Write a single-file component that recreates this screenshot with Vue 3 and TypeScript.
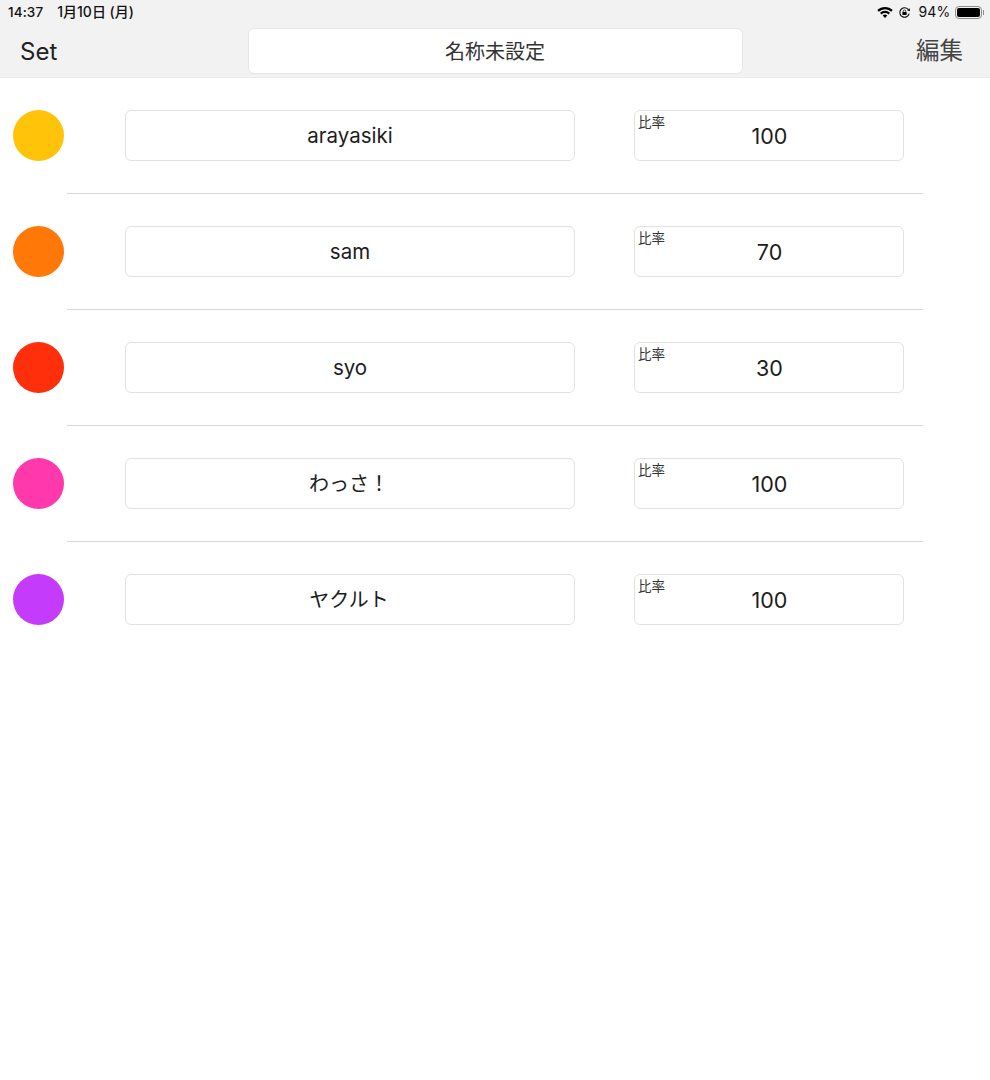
<script setup lang="ts">
interface Row { color: string; name: string; rate: number; cjk?: boolean }
const rows: Row[] = [
  { color: '#ffc30a', name: 'arayasiki', rate: 100 },
  { color: '#ff7808', name: 'sam', rate: 70 },
  { color: '#ff2e0b', name: 'syo', rate: 30 },
  { color: '#ff38ac', name: 'わっさ！', rate: 100, cjk: true },
  { color: '#c43bfb', name: 'ヤクルト', rate: 100, cjk: true },
]
</script>

<template>
  <div class="page">
    <header class="top">
      <div class="status">
        <div class="status-left"><span class="time">14:37</span><span class="date">1月10日 (月)</span></div>
        <div class="status-right">
          <svg class="wifi" viewBox="0 0 16 12" width="16" height="12">
            <path d="M0.3 4.1A11 11 0 0 1 15.7 4.1L14.2 5.7A8.8 8.8 0 0 0 1.8 5.7Z" fill="#000" />
            <path d="M3 6.8A7.2 7.2 0 0 1 13 6.8L11.5 8.4A5 5 0 0 0 4.5 8.4Z" fill="#000" />
            <path d="M5.7 9.5A3.3 3.3 0 0 1 10.3 9.5L8 11.9Z" fill="#000" />
          </svg>
          <svg class="lock" viewBox="0 0 14 14" width="13" height="13">
            <path d="M12 8.2A5.1 5.1 0 1 1 10.9 3.6" fill="none" stroke="#000" stroke-width="1.2" />
            <path d="M9.8 4.6L12.6 2.3L12.9 5.7Z" fill="#000" />
            <rect x="4.7" y="6.4" width="4.6" height="3.4" rx="0.6" fill="#000" />
            <path d="M5.6 6.6V5.7A1.4 1.4 0 0 1 8.4 5.7V6.6" fill="none" stroke="#000" stroke-width="0.8" />
          </svg>
          <span class="pct">94%</span>
          <span class="battery"><span class="battery-fill"></span></span>
          <span class="battery-cap"></span>
        </div>
      </div>
      <div class="nav">
        <span class="set">Set</span>
        <div class="title">名称未設定</div>
        <span class="edit">編集</span>
      </div>
    </header>
    <main>
      <section v-for="row in rows" :key="row.name" class="row">
        <span class="dot" :style="{ backgroundColor: row.color }"></span>
        <div class="field name" :class="{ cjk: row.cjk }">{{ row.name }}</div>
        <div class="field rate">
          <span class="rate-label">比率</span>
          {{ row.rate }}
        </div>
      </section>
    </main>
  </div>
</template>

<style scoped>
.page {
  width: 990px;
  height: 1080px;
  background: #fff;
  font-family: Inter, "Noto Sans CJK JP", sans-serif;
  color: #1c1c1c;
  overflow: hidden;
}
.top {
  height: 78px;
  box-sizing: border-box;
  background: #f2f2f2;
  border-bottom: 1px solid #ececec;
}
.status {
  height: 24px;
  display: flex;
  justify-content: space-between;
  align-items: center;
  padding: 0 6px 0 8px;
  font-size: 13.5px;
  line-height: 16px;
  color: #111;
}
.status-left { display: flex; align-items: center; gap: 14px; font-weight: 500; }
.date { font-size: 14px; }
.time { letter-spacing: 0.1px; }
.status-right { display: flex; align-items: center; }
.wifi { margin-right: 5px; }
.lock { margin-right: 7px; }
.pct { font-size: 14px; margin-right: 4px; letter-spacing: 0.2px; }
.battery {
  width: 27px;
  height: 13px;
  box-sizing: border-box;
  border: 1px solid #8d8d8d;
  border-radius: 4px;
  padding: 1px;
  display: flex;
}
.battery-fill {
  flex: 1;
  background: #000;
  border-radius: 2px;
}
.battery-cap {
  width: 1.5px;
  height: 5px;
  background: #8d8d8d;
  margin-left: 1px;
}
.nav {
  display: flex;
  align-items: center;
  height: 46px;
  margin-top: 4px;
}
.set {
  width: 248px;
  box-sizing: border-box;
  padding-left: 20px;
  font-size: 24px;
  color: #222;
}
.title {
  width: 495px;
  height: 46px;
  box-sizing: border-box;
  background: #fff;
  border: 1px solid #e6e6e6;
  border-radius: 6px;
  text-align: center;
  line-height: 46px;
  font-size: 20px;
  color: #333;
  padding-right: 1px;
}
.edit {
  flex: 1;
  text-align: right;
  padding-right: 27px;
  font-size: 23.5px;
  line-height: 30px;
  color: #444;
}
.row {
  height: 116px;
  box-sizing: border-box;
  display: flex;
  align-items: flex-start;
  padding: 32px 0 0 13px;
  position: relative;
}
.row:not(:last-child)::after {
  content: "";
  position: absolute;
  left: 67px;
  width: 856px;
  bottom: 0;
  height: 1px;
  background: #d8d8d8;
}
.dot {
  width: 51px;
  height: 51px;
  border-radius: 50%;
  flex: none;
}
.field {
  height: 51px;
  box-sizing: border-box;
  border: 1px solid #e2e2e2;
  border-radius: 6px;
  background: #fff;
  text-align: center;
  line-height: 50px;
  font-size: 20.5px;
  color: #1c1c1c;
}
.name {
  width: 450px;
  margin-left: 61px;
}
.name.cjk {
  font-size: 20px;
  line-height: 51px;
  padding-right: 2px;
}
.rate {
  width: 270px;
  margin-left: 59px;
  padding-left: 1px;
  position: relative;
  font-size: 21.5px;
}
.rate-label {
  position: absolute;
  left: 3px;
  top: 3px;
  font-size: 13.5px;
  line-height: 16px;
  color: #333;
}
</style>
